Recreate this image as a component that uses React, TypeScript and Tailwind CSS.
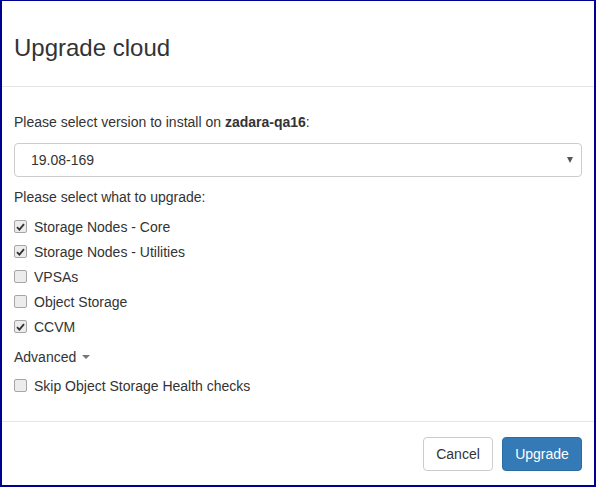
import React from "react";

function Box({ checked }: { checked: boolean }) {
  return (
    <span className="w-[13px] h-[13px] rounded-[2px] border border-[#a6a6a6] bg-[#ececec] flex items-center justify-center shrink-0">
      {checked && (
        <svg width="9" height="8" viewBox="0 0 9 8">
          <path d="M1 4.2 L3.4 6.6 L8 1.2" stroke="#333" strokeWidth="1.8" fill="none" />
        </svg>
      )}
    </span>
  );
}

function Row({ label, checked }: { label: string; checked: boolean }) {
  return (
    <div className="h-[25px] flex items-center gap-[7px]">
      <Box checked={checked} />
      <span>{label}</span>
    </div>
  );
}

export default function App() {
  return (
    <div
      className="w-[596px] h-[487px] bg-white border-l-2 border-t border-r-2 border-b-2 border-[#000090] flex flex-col text-[14px] leading-[20px] text-[#333]"
      style={{ fontFamily: '"Liberation Sans", Arial, sans-serif' }}
    >
      <div className="h-[86px] shrink-0 border-b border-[#e5e5e5] flex items-center px-[12px] pt-[8px]">
        <h4 className="text-[24px] leading-[26px]">Upgrade cloud</h4>
      </div>
      <div className="px-[12px] pt-[25px] pb-[23px] flex flex-col border-b border-[#e5e5e5]">
        <div>
          Please select version to install on <b>zadara-qa16</b>:
        </div>
        <div className="mt-[11px] h-[34px] border border-[#ccc] rounded-[4px] flex items-center pl-[16px] pr-[8px] justify-between">
          <span>19.08-169</span>
          <span className="w-0 h-0 border-t-[6px] border-t-[#555] border-x-[3.5px] border-x-transparent" />
        </div>
        <div className="mt-[10px]">Please select what to upgrade:</div>
        <div className="mt-[7px] flex flex-col">
          <Row label="Storage Nodes - Core" checked />
          <Row label="Storage Nodes - Utilities" checked />
          <Row label="VPSAs" checked={false} />
          <Row label="Object Storage" checked={false} />
          <Row label="CCVM" checked />
        </div>
        <div className="mt-[8px] flex items-center gap-[6px]">
          <span>Advanced</span>
          <span className="w-0 h-0 border-t-[4px] border-t-[#777] border-x-[4px] border-x-transparent" />
        </div>
        <div className="mt-[6px]">
          <Row label="Skip Object Storage Health checks" checked={false} />
        </div>
      </div>
      <div className="px-[12px] pt-[15px] flex justify-end gap-[9px]">
        <button className="h-[34px] w-[70px] border border-[#ccc] rounded-[4px] bg-white text-[#333]">Cancel</button>
        <button className="h-[34px] w-[80px] border border-[#2e6da4] rounded-[4px] bg-[#337ab7] text-white">Upgrade</button>
      </div>
    </div>
  );
}
